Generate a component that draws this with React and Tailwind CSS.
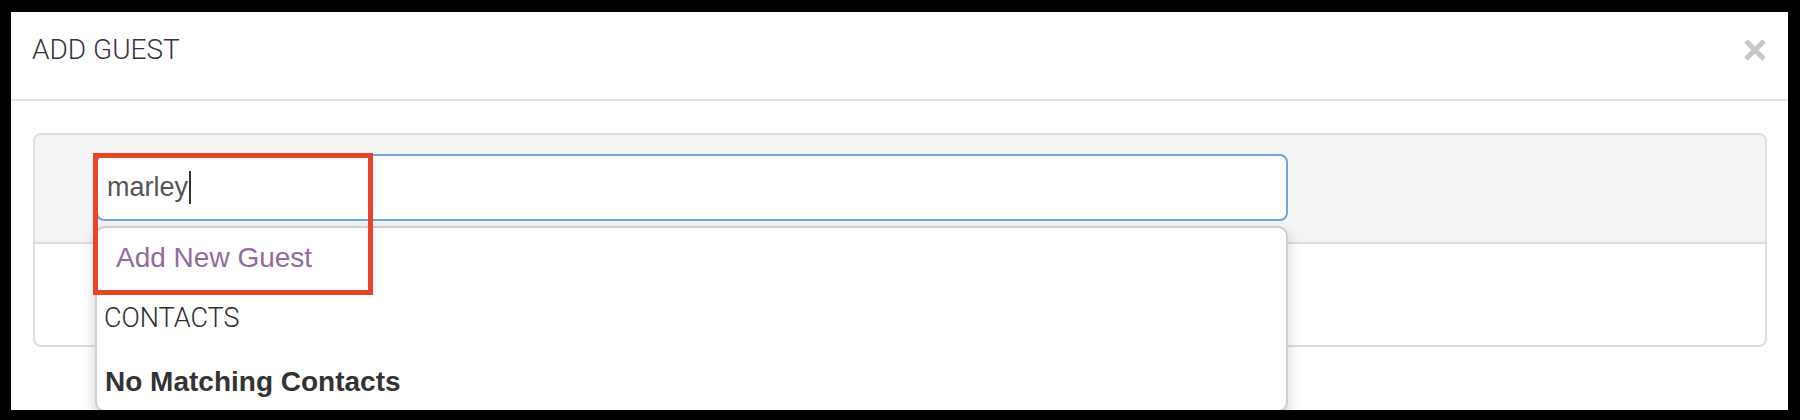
import React from 'react';

function CloseIcon() {
    return (
        <svg width="24" height="24" viewBox="0 0 24 24" className="text-[#c8c8c8]">
            <path d="M3 3L21 21M21 3L3 21" stroke="currentColor" strokeWidth="5" fill="none" />
        </svg>
    );
}

export default function App() {
    return (
        <div className="w-[1800px] h-[420px] bg-black pt-[12px] pl-[11px] overflow-hidden">
            <div className="w-[1777px] h-[398px] bg-white overflow-hidden font-['Liberation_Sans',Arial,sans-serif]">
                {/* Modal header */}
                <div className="h-[89px] border-b-2 border-[#e5e5e5] flex items-start justify-between pl-[21px] pr-[21px]">
                    <h4 className="pt-[24px] font-['Roboto',sans-serif] font-light text-[28px] leading-[28px] text-[#3a3146]">
                        ADD GUEST
                    </h4>
                    <button className="mt-[26px]">
                        <CloseIcon />
                    </button>
                </div>

                {/* Modal body */}
                <div className="pl-[22px] pt-[32px]">
                    <div className="w-[1734px] h-[214px] border-2 border-[#dddddd] rounded-[8px]">
                        <div className="h-[109px] bg-[#f4f4f4] border-b-2 border-[#dddddd] rounded-t-[6px] pl-[61px] pt-[19px]">
                            <div className="relative w-[1192px]">
                                <div className="h-[67px] bg-white border-2 border-[#6ea6e1] rounded-[8px] flex items-center pl-[9px]">
                                    <span className="text-[27px] text-[#555555]">marley</span>
                                    <span className="ml-[1px] w-[2px] h-[33px] bg-[#333333]"></span>
                                </div>

                                {/* Suggestions dropdown */}
                                <div className="absolute left-[-1px] top-[72px] w-[1193px] h-[186px] bg-white border-2 border-[#d0d0d0] rounded-[10px] shadow-[0_6px_14px_rgba(0,0,0,0.18)] z-10">
                                    <div className="pt-[14px] pl-[19px] text-[28px] leading-[32px] text-[#8e6ca0]">
                                        Add New Guest
                                    </div>
                                    <div className="mt-[29px] pl-[7px] font-['Roboto',sans-serif] font-light text-[27px] leading-[30px] text-[#2e2e2e]">
                                        CONTACTS
                                    </div>
                                    <div className="mt-[33px] pl-[8px] font-bold text-[28px] leading-[32px] text-[#333333]">
                                        No Matching Contacts
                                    </div>
                                </div>

                                {/* Highlight annotation */}
                                <div className="absolute left-[-3px] top-[-1px] w-[280px] h-[142px] border-[5px] border-[#e8432b] z-20"></div>
                            </div>
                        </div>
                        <div className="h-[101px]"></div>
                    </div>
                </div>
            </div>
        </div>
    );
}
